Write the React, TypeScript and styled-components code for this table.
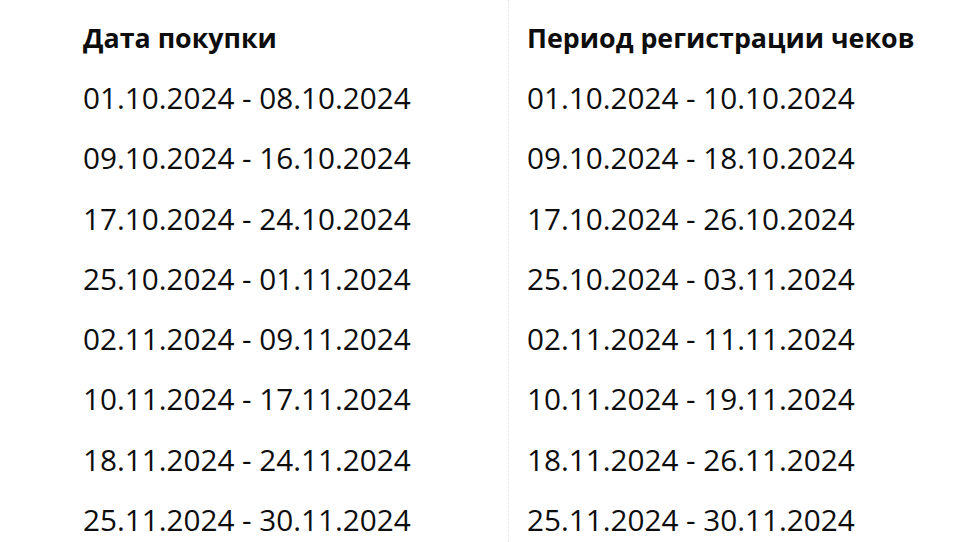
import React from 'react';
import styled, { createGlobalStyle } from 'styled-components';

type Period = {
    purchase: string;
    registration: string;
};

const PERIODS: Period[] = [
    { purchase: '01.10.2024 - 08.10.2024', registration: '01.10.2024 - 10.10.2024' },
    { purchase: '09.10.2024 - 16.10.2024', registration: '09.10.2024 - 18.10.2024' },
    { purchase: '17.10.2024 - 24.10.2024', registration: '17.10.2024 - 26.10.2024' },
    { purchase: '25.10.2024 - 01.11.2024', registration: '25.10.2024 - 03.11.2024' },
    { purchase: '02.11.2024 - 09.11.2024', registration: '02.11.2024 - 11.11.2024' },
    { purchase: '10.11.2024 - 17.11.2024', registration: '10.11.2024 - 19.11.2024' },
    { purchase: '18.11.2024 - 24.11.2024', registration: '18.11.2024 - 26.11.2024' },
    { purchase: '25.11.2024 - 30.11.2024', registration: '25.11.2024 - 30.11.2024' },
];

const GlobalStyle = createGlobalStyle`
    html, body {
        margin: 0;
        padding: 0;
        background: #ffffff;
    }
    body {
        font-family: 'Open Sans', 'Liberation Sans', sans-serif;
        color: #0d0d0d;
    }
`;

const App: React.FC = () => {
    return (
        <>
            <GlobalStyle />
            <Table>
                <Column>
                    <Title>Дата покупки</Title>
                    {PERIODS.map((period) => (
                        <Cell key={period.purchase}>{period.purchase}</Cell>
                    ))}
                </Column>
                <Column $divided>
                    <Title>Период регистрации чеков</Title>
                    {PERIODS.map((period) => (
                        <Cell key={period.registration}>{period.registration}</Cell>
                    ))}
                </Column>
            </Table>
        </>
    );
};

const Table = styled.div`
    display: grid;
    grid-template-columns: 508px 448px;
    width: 956px;
    height: 542px;
    overflow: hidden;
    box-sizing: border-box;
`;

const Column = styled.div<{ $divided?: boolean }>`
    display: flex;
    flex-direction: column;
    padding-top: 8px;
    padding-left: ${(props) => (props.$divided ? '18px' : '83px')};
    border-left: ${(props) => (props.$divided ? '1px dotted #e2e2e2' : 'none')};
`;

const Title = styled.span`
    font-weight: 700;
    font-size: 26.8px;
    line-height: 60px;
    white-space: nowrap;
`;

const Cell = styled.span`
    font-size: 29.7px;
    line-height: 60.3px;
    white-space: nowrap;
`;

export default App;
